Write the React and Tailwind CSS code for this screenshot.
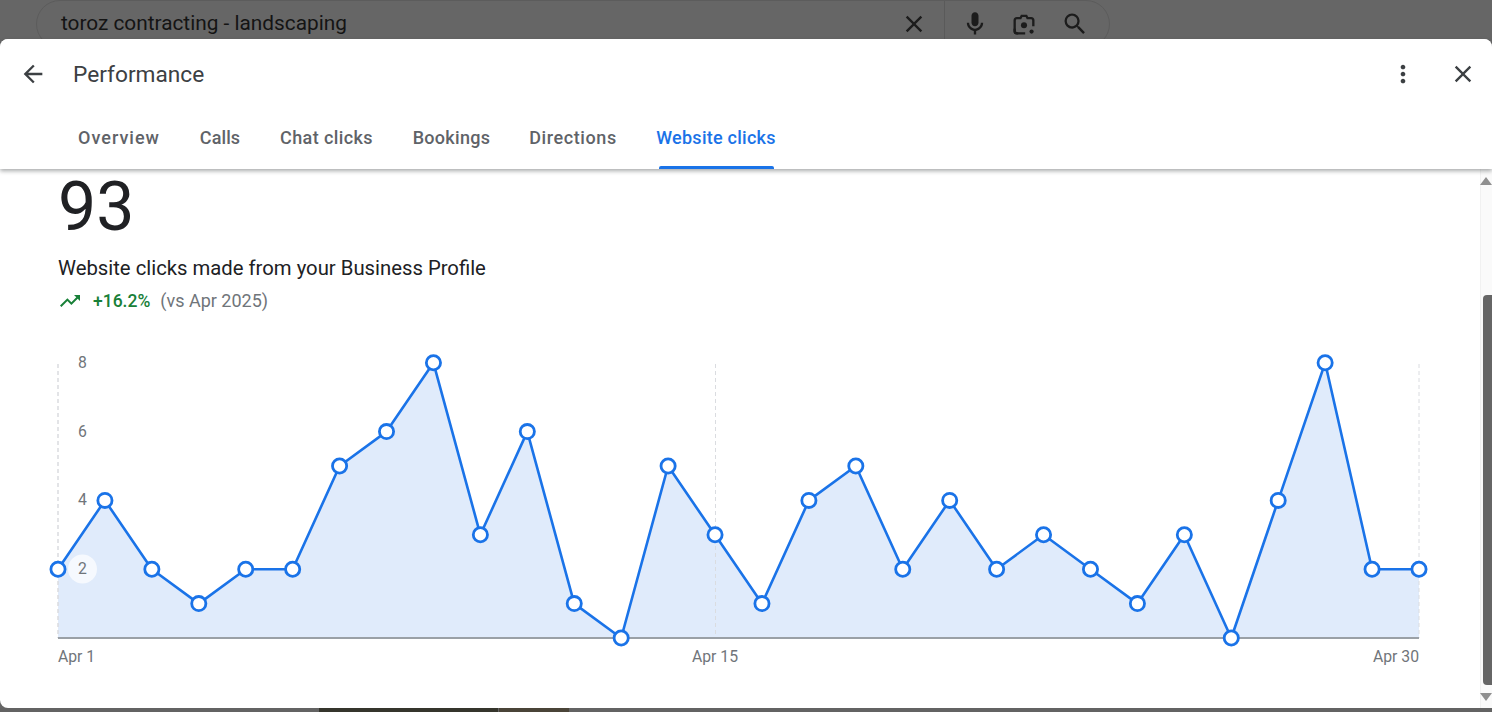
import { useState } from "react";

const clicks = [2, 4, 2, 1, 2, 2, 5, 6, 8, 3, 6, 1, 0, 5, 3, 1, 4, 5, 2, 4, 2, 3, 2, 1, 3, 0, 4, 8, 2, 2];

const tabs = [
  { label: "Overview", box: "w-[122px]", spacing: "tracking-[1px]" },
  { label: "Calls", box: "w-[80px]", spacing: "tracking-[0.1px]" },
  { label: "Chat clicks", box: "w-[133px]", spacing: "tracking-[0.4px]" },
  { label: "Bookings", box: "w-[117px]", spacing: "tracking-[0.3px]" },
  { label: "Directions", box: "w-[126px]", spacing: "tracking-[0.6px]" },
  { label: "Website clicks", box: "w-[160px]", spacing: "tracking-[0.25px]" },
];

// chart box starts at x=48, y=351 in the page
const px = (i) => 10 + (i * 1361) / 29;
const py = (v) => 288 - v * 34.4;

function Icon({ d, className }) {
  return (
    <svg viewBox="0 0 24 24" className={className} fill="currentColor">
      <path d={d} />
    </svg>
  );
}

const closePath = "M19 6.41L17.59 5 12 10.59 6.41 5 5 6.41 10.59 12 5 17.59 6.41 19 12 13.41 17.59 19 19 17.59 13.41 12z";

function SearchBar() {
  return (
    <div className="h-[39px] shrink-0 overflow-hidden pl-9 pr-[382px]">
      <div className="h-12 rounded-full border border-[#5c5c5c] flex items-center">
        <span className="ml-6 flex-1 text-[20.8px] text-[#141414] font-['Roboto',sans-serif] -mt-px">
          toroz contracting - landscaping
        </span>
        <Icon d={closePath} className="w-7 h-7 text-[#1c1c1c] mr-[16px]" />
        <div className="w-px h-full bg-[#5a5a5a] mr-4" />
        <Icon
          d="M12 14c1.66 0 3-1.34 3-3V5c0-1.66-1.34-3-3-3S9 3.34 9 5v6c0 1.66 1.34 3 3 3zM17 11c0 2.76-2.24 5-5 5s-5-2.24-5-5H5c0 3.53 2.61 6.43 6 6.92V21h2v-3.08c3.39-.49 6-3.39 6-6.92h-2z"
          className="w-7 h-7 text-[#1c1c1c] mr-[21px]"
        />
        <svg viewBox="0 0 24 24" className="w-7 h-7 text-[#1c1c1c] mr-[23px]" fill="none" stroke="currentColor" strokeWidth="2">
          <path d="M7 20H6a2 2 0 0 1-2-2V9a2 2 0 0 1 2-2h3l1-2h4l1 2h3a2 2 0 0 1 2 2v5" />
          <path d="M4 16v2a2 2 0 0 0 2 2h7" />
          <circle cx="12" cy="13" r="2.6" fill="currentColor" stroke="none" />
          <circle cx="18.5" cy="18.5" r="1.8" fill="currentColor" stroke="none" />
        </svg>
        <Icon
          d="M15.5 14h-.79l-.28-.27A6.471 6.471 0 0 0 16 9.5 6.5 6.5 0 1 0 9.5 16c1.61 0 3.09-.59 4.23-1.57l.27.28v.79l5 4.99L20.49 19l-4.99-5zm-6 0C7.01 14 5 11.99 5 9.5S7.01 5 9.5 5 14 7.01 14 9.5 11.99 14 9.5 14z"
          className="w-7 h-7 text-[#1c1c1c] mr-[20px]"
        />
      </div>
    </div>
  );
}

function Header() {
  const [active, setActive] = useState("Website clicks");

  return (
    <div className="h-[130px] shrink-0 bg-white rounded-t-lg relative z-10 shadow-[0_2px_4px_rgba(60,64,67,0.45)]">
      <div className="h-[70px] flex items-center pl-[19px] pr-[15px]">
        <Icon d="M20 11H7.83l5.59-5.59L12 4l-8 8 8 8 1.41-1.41L7.83 13H20v-2z" className="w-7 h-7 text-[#3c4043]" />
        <span className="ml-[26px] mt-0.5 flex-1 text-[22.7px] text-[#3c4043] font-['Roboto',sans-serif]">Performance</span>
        <Icon
          d="M12 8c1.1 0 2-.9 2-2s-.9-2-2-2-2 .9-2 2 .9 2 2 2zm0 2c-1.1 0-2 .9-2 2s.9 2 2 2 2-.9 2-2-.9-2-2-2zm0 6c-1.1 0-2 .9-2 2s.9 2 2 2 2-.9 2-2-.9-2-2-2z"
          className="w-7 h-7 text-[#3c4043] mr-[32px]"
        />
        <Icon d={closePath} className="w-7 h-7 text-[#3c4043]" />
      </div>
      <div className="flex pl-[58px] h-[60px]">
        {tabs.map((tab) => (
          <button
            key={tab.label}
            onClick={() => setActive(tab.label)}
            className={`${tab.box} ${tab.spacing} flex flex-col items-center text-[18px] font-[480] font-['Roboto',sans-serif] ${
              active === tab.label ? "text-[#1a73e8]" : "text-[#5f6368]"
            }`}
          >
            <span className="mt-[17px] leading-[24px] flex-1">{tab.label}</span>
            <span className={`h-[3px] w-[115px] rounded-t-[2px] ${active === tab.label ? "bg-[#1a73e8]" : ""}`} />
          </button>
        ))}
      </div>
    </div>
  );
}

function Chart() {
  const line = clicks.map((v, i) => `${px(i)},${py(v)}`).join(" ");
  const area = `${px(0)},${py(0)} ${line} ${px(29)},${py(0)}`;

  return (
    <div className="relative h-[340px] w-[1381px] ml-12 mt-[37px] font-['Roboto',sans-serif] text-[15.75px] text-[#70757a]">
      <svg viewBox="0 0 1381 340" className="w-full h-full block">
        <polygon points={area} fill="#e0ebfb" />
        <line x1={px(0)} x2={px(0)} y1="14" y2="288" stroke="#dadce0" strokeWidth="1.5" strokeDasharray="4 3" />
        <line x1="667.5" x2="667.5" y1="14" y2="288" stroke="#dadce0" strokeWidth="1" strokeDasharray="4 3" />
        <line x1={px(29)} x2={px(29)} y1="14" y2="288" stroke="#dadce0" strokeWidth="1" strokeDasharray="4 3" />
        <line x1={px(0)} x2={px(29)} y1="288" y2="288" stroke="#9aa0a6" strokeWidth="2" />
        <circle cx="34.5" cy="219" r="14.5" fill="#fff" fillOpacity="0.7" />
        <polyline points={line} fill="none" stroke="#1a73e8" strokeWidth="2.6" strokeLinejoin="round" />
        {clicks.map((v, i) => (
          <circle key={i} cx={px(i)} cy={py(v)} r="7.1" fill="#fff" stroke="#1a73e8" strokeWidth="2.8" />
        ))}
      </svg>
      <span className="absolute left-[30px] top-[4px] leading-[18px]">8</span>
      <span className="absolute left-[30px] top-[73px] leading-[18px]">6</span>
      <span className="absolute left-[30px] top-[141px] leading-[18px]">4</span>
      <span className="absolute left-[30px] top-[210px] leading-[18px]">2</span>
      <span className="absolute left-[10px] top-[298px] leading-[18px]">Apr 1</span>
      <span className="absolute left-[667px] -translate-x-1/2 top-[298px] leading-[18px]">Apr 15</span>
      <span className="absolute right-[10px] top-[298px] leading-[18px]">Apr 30</span>
    </div>
  );
}

function Scrollbar() {
  return (
    <div className="w-[12px] shrink-0 flex flex-col items-end bg-[#fafafa] border-l border-[#f1f1f1]">
      <div className="mt-[8px] w-0 h-0 border-x-[6px] border-x-transparent border-b-[8px] border-b-[#8f8f8f]" />
      <div className="mt-[110px] w-[9px] h-[390px] bg-[#666666] rounded-l-[4px]" />
      <div className="mt-[8px] w-0 h-0 border-x-[6px] border-x-transparent border-t-[8px] border-t-[#8f8f8f]" />
    </div>
  );
}

function BottomStrip() {
  return (
    <div className="h-1 shrink-0 flex bg-[#636363]">
      <div className="w-[319px]" />
      <div className="w-[179px] bg-[#35352c]" />
      <div className="w-px" />
      <div className="w-[70px] bg-[#4a4438]" />
    </div>
  );
}

export default function App() {
  return (
    <div className="h-[712px] w-[1492px] overflow-hidden bg-[#666666] flex flex-col">
      <SearchBar />
      <div className="flex-1 flex flex-col min-h-0 bg-white rounded-lg relative z-10">
        <Header />
        <div className="flex-1 flex min-h-0">
          <div className="flex-1 min-w-0">
            <div className="pl-[58px] font-['Roboto',sans-serif]">
              <div className="text-[68px] leading-[68px] mt-[4px] text-[#202124]">93</div>
              <div className="text-[20.3px] leading-[24px] mt-[15px] text-[#202124]">Website clicks made from your Business Profile</div>
              <div className="flex items-center mt-[9px] text-[18px] leading-[24px]">
                <Icon
                  d="M16 6l2.29 2.29-4.88 4.88-4-4L2 16.59 3.41 18l6-6 4 4 6.3-6.29L22 12V6z"
                  className="w-6 h-6 text-[#188038]"
                />
                <span className="ml-[11px] font-medium text-[17.5px] text-[#188038]">+16.2%</span>
                <span className="ml-[10px] text-[#70757a]">(vs Apr 2025)</span>
              </div>
            </div>
            <Chart />
          </div>
          <Scrollbar />
        </div>
      </div>
      <BottomStrip />
    </div>
  );
}
